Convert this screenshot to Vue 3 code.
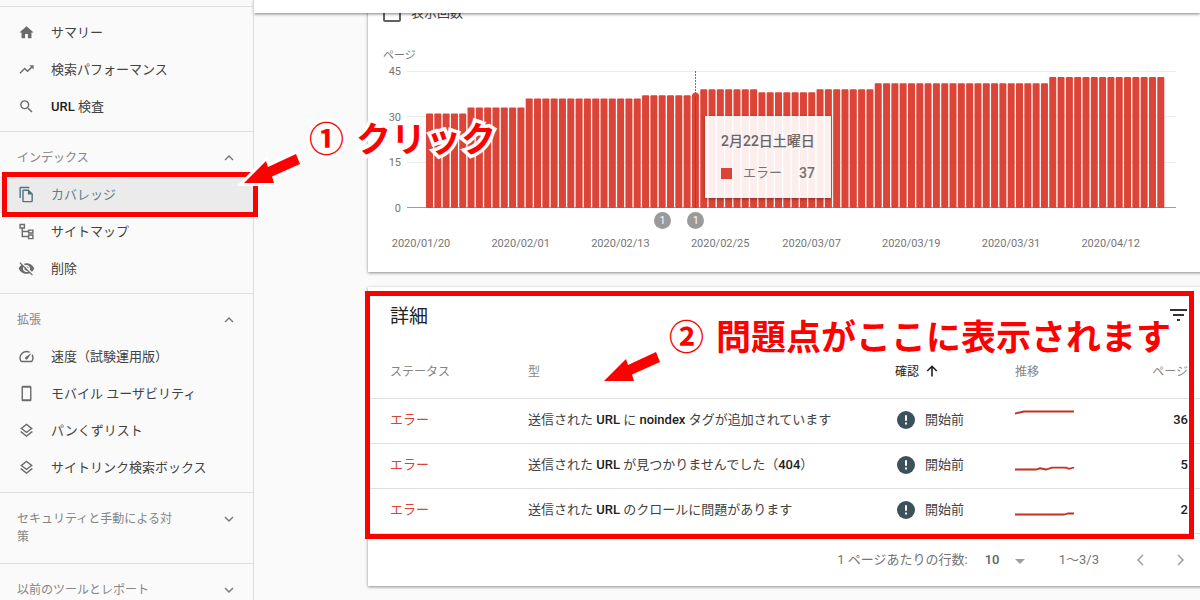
<script setup>
import { ref } from 'vue'

const icons = {
  home: 'M10 20v-6h4v6h5v-8h3L12 3 2 12h3v8z',
  trend: 'M16 6l2.29 2.29-4.88 4.88-4-4L2 16.59 3.41 18l6-6 4 4 6.3-6.29L22 12V6z',
  search: 'M15.5 14h-.79l-.28-.27A6.47 6.47 0 0 0 16 9.5 6.5 6.5 0 1 0 9.5 16c1.61 0 3.09-.59 4.23-1.57l.27.28v.79l5 4.99L20.49 19l-4.99-5zm-6 0C7.01 14 5 11.99 5 9.5S7.01 5 9.5 5 14 7.01 14 9.5 11.99 14 9.5 14z',
  copy: 'M16 1H4c-1.1 0-2 .9-2 2v14h2V3h12V1zm-1 4H8c-1.1 0-1.99.9-1.99 2L6 21c0 1.1.89 2 1.99 2H19c1.1 0 2-.9 2-2V11l-6-6zM8 21V7h6v5h5v9H8z',
  tree: 'M2 1h8v7H7v3h7V9h8v6h-8v-2H7v5h7v-2h8v7h-8v-3H5V8H2zM4 3v3h4V3zM16 11v2h4v-2zM16 18v3h4v-3z',
  hidden: 'M12 7c2.76 0 5 2.24 5 5 0 .65-.13 1.26-.36 1.83l2.92 2.92c1.51-1.26 2.7-2.89 3.43-4.75-1.73-4.39-6-7.5-11-7.5-1.4 0-2.74.25-3.98.7l2.16 2.16C10.74 7.13 11.35 7 12 7zM2 4.27l2.28 2.28.46.46A11.8 11.8 0 0 0 1 12c1.73 4.39 6 7.5 11 7.5 1.55 0 3.03-.3 4.38-.84l.42.42L19.73 22 21 20.73 3.27 3 2 4.27zM7.53 9.8l1.55 1.55c-.05.21-.08.43-.08.65 0 1.66 1.34 3 3 3 .22 0 .44-.03.65-.08l1.55 1.55c-.67.33-1.41.53-2.2.53-2.76 0-5-2.24-5-5 0-.79.2-1.53.53-2.2zm4.31-.78l3.15 3.15.02-.16c0-1.66-1.34-3-3-3l-.17.01z',
  speed: 'M20.38 8.57l-1.23 1.85a8 8 0 0 1-.22 7.58H5.07A8 8 0 0 1 15.58 6.85l1.85-1.23A10 10 0 0 0 3.35 19a2 2 0 0 0 1.72 1h13.85a2 2 0 0 0 1.74-1 10 10 0 0 0-.27-10.44zm-9.79 6.84a2 2 0 0 0 2.83 0l5.66-8.49-8.49 5.66a2 2 0 0 0 0 2.83z',
  phone: 'M17 1.01L7 1c-1.1 0-2 .9-2 2v18c0 1.1.9 2 2 2h10c1.1 0 2-.9 2-2V3c0-1.1-.9-1.99-2-1.99zM17 20H7V4h10v16z',
  layers: 'M11.99 18.54l-7.37-5.73L3 14.07l9 7 9-7-1.63-1.27-7.38 5.74zM12 16l7.36-5.73L21 9l-9-7-9 7 1.63 1.27L12 16zm0-11.47L17.74 9 12 13.47 6.26 9 12 4.53z'
}

const sections = [
  { items: [
    { icon: 'home', text: 'サマリー' },
    { icon: 'trend', text: '検索パフォーマンス' },
    { icon: 'search', latin: 'URL', text: ' 検査' }
  ] },
  { title: 'インデックス', open: true, items: [
    { icon: 'copy', text: 'カバレッジ', active: true },
    { icon: 'tree', text: 'サイトマップ' },
    { icon: 'hidden', text: '削除' }
  ] },
  { title: '拡張', open: true, items: [
    { icon: 'speed', text: '速度（試験運用版）' },
    { icon: 'phone', text: 'モバイル ユーザビリティ' },
    { icon: 'layers', text: 'パンくずリスト' },
    { icon: 'layers', text: 'サイトリンク検索ボックス' }
  ] },
  { title: 'セキュリティと手動による対策', items: [] },
  { title: '以前のツールとレポート', items: [] }
]

const runs = [[31, 5], [33, 7], [36, 14], [37, 7], [39, 7], [38, 7], [39, 7], [41, 21], [43, 14]]
const values = runs.flatMap(([value, count]) => Array(count).fill(value))

const plotWidth = 769
const plotHeight = 137
const dayWidth = 8.31
const barHeight = v => (v / 45) * plotHeight
const bars = values.map((v, i) => ({ x: 19 + i * dayWidth, y: plotHeight - barHeight(v), h: barHeight(v) }))
const dayX = day => 14 + day * dayWidth
const place = day => ({ left: (dayX(day) / plotWidth) * 100 + '%' })

const dates = [
  [0, '2020/01/20'], [12, '2020/02/01'], [24, '2020/02/13'], [36, '2020/02/25'],
  [47, '2020/03/07'], [59, '2020/03/19'], [71, '2020/03/31'], [83, '2020/04/12']
]

const rows = [
  { parts: ['送信された ', 'URL', ' に ', 'noindex', ' タグが追加されています'], pages: 36, line: '0,5.5 9,3.5 59,3.5' },
  { parts: ['送信された ', 'URL', ' が見つかりませんでした（', '404', '）'], pages: 5, line: '0,16.5 21,16.5 25,15.3 31,16.5 37,14.7 51,14.7 54,15.9 59,14.5' },
  { parts: ['送信された ', 'URL', ' のクロールに問題があります'], pages: 2, line: '0,16.5 49,16.5 53,15.5 59,15.5' }
]

const impressions = ref(false)
const perPage = ref('10')
</script>

<template>
  <div class="page">
    <nav class="sidebar">
      <section v-for="(section, s) in sections" :key="s" class="group" :class="{ plain: !section.title }">
        <button v-if="section.title" class="heading" :class="{ closed: !section.open }" type="button">
          <span>{{ section.title }}</span>
          <svg class="chevron" viewBox="0 0 10 10"><path :d="section.open ? 'M1 7l4-4 4 4' : 'M1 3l4 4 4-4'" /></svg>
        </button>
        <ul v-if="section.items.length">
          <li v-for="item in section.items" :key="item.text" :class="{ active: item.active }">
            <a href="#">
              <svg class="icon" viewBox="0 0 24 24"><path fill-rule="evenodd" :d="icons[item.icon]" /></svg>
              <span><b v-if="item.latin">{{ item.latin }}</b>{{ item.text }}</span>
            </a>
          </li>
        </ul>
      </section>
    </nav>

    <main class="main">
      <header class="topbar"></header>
      <div class="content">
        <section class="card chart-card">
          <label class="check"><input v-model="impressions" type="checkbox" /><span>表示回数</span></label>
          <div class="caption">ページ</div>
          <div class="chart">
            <div class="scale"><span>45</span><span>30</span><span>15</span><span>0</span></div>
            <div class="graph">
              <svg class="plot" :viewBox="`0 0 ${plotWidth} ${plotHeight}`" preserveAspectRatio="none">
                <path class="rule" d="M0 .5H769M0 45.5H769M0 91.5H769" />
                <path class="base" d="M0 136.5H769" />
                <rect v-for="(bar, i) in bars" :key="i" class="bar" :x="bar.x" :y="bar.y" width="7" :height="bar.h" rx="0.8" />
                <circle class="bar" cx="288.5" cy="25" r="3.5" />
                <path class="cursor dots" d="M288.5 0V22" />
                <path class="cursor" d="M288.5 25V137" />
              </svg>
              <div class="markers">
                <span v-for="day in [29, 33]" :key="day" class="marker" :style="place(day)">1</span>
              </div>
              <div class="dates">
                <span v-for="[day, text] in dates" :key="text" :style="place(day)">{{ text }}</span>
              </div>
              <div class="tooltip">
                <strong>2月22日土曜日</strong>
                <div class="legend"><i></i><span>エラー</span><b>37</b></div>
              </div>
            </div>
          </div>
        </section>

        <section class="card">
          <div class="title">
            <h2>詳細</h2>
            <button type="button" aria-label="フィルタ">
              <svg viewBox="0 0 18 12"><path d="M0 1h17M3 6h11M7 11h3" /></svg>
            </button>
          </div>
          <table>
            <thead>
              <tr>
                <th class="c-status">ステータス</th>
                <th>型</th>
                <th class="c-check sorted">確認
                  <svg viewBox="0 0 12 12"><path d="M6 11.5V1.5M1.3 6L6 1.3 10.7 6" /></svg>
                </th>
                <th class="c-trend">推移</th>
                <th class="c-pages">ページ</th>
              </tr>
            </thead>
            <tbody>
              <tr v-for="row in rows" :key="row.pages">
                <td class="c-status error">エラー</td>
                <td><template v-for="(part, i) in row.parts" :key="i"><b v-if="i % 2">{{ part }}</b><template v-else>{{ part }}</template></template></td>
                <td>
                  <div class="state">
                    <svg viewBox="0 0 18 18"><circle cx="9" cy="9" r="9" /><path d="M9 4.3v5.4M9 11.5v2" /></svg>開始前
                  </div>
                </td>
                <td><svg class="spark" viewBox="0 0 60 24"><polyline :points="row.line" /></svg></td>
                <td class="c-pages"><b>{{ row.pages }}</b></td>
              </tr>
            </tbody>
          </table>
          <footer class="pager">
            <label for="per-page">1 ページあたりの行数:</label>
            <div class="picker">
              <select id="per-page" v-model="perPage"><option>10</option><option>25</option></select>
              <svg viewBox="0 0 10 5"><path d="M0 0h10L5 5z" /></svg>
            </div>
            <span class="range">1〜3/3</span>
            <button type="button" aria-label="前へ"><svg viewBox="0 0 8 12"><path d="M7 1L2 6l5 5" /></svg></button>
            <button type="button" aria-label="次へ"><svg viewBox="0 0 8 12"><path d="M1 1l5 5-5 5" /></svg></button>
          </footer>
          <div class="frame"></div>
        </section>
      </div>
    </main>

    <div class="note first"><span>①</span><span>クリック</span></div>
    <div class="note second"><span>②</span><span>問題点がここに表示されます</span></div>
    <svg class="arrow one" viewBox="0 0 64 40"><path d="M4 34L26 12l2 6 28-13 4 10-28 12.500 2 6.500z" /></svg>
    <svg class="arrow two" viewBox="0 0 64 40"><path d="M4 34L26 12l2 6 28-13 4 10-28 12.500 2 6.500z" /></svg>
  </div>
</template>

<style>
body { margin: 0; }
</style>

<style scoped>
* { box-sizing: border-box; }
.page {
  position: relative;
  display: flex;
  height: 100vh;
  overflow: hidden;
  background: #fafafa;
  color: #424242;
  font: 400 13px/18px Roboto, "Noto Sans CJK JP", sans-serif;
}
button { padding: 0; border: 0; background: none; font: inherit; color: inherit; }
b { font-weight: 500; color: #212121; }

.sidebar {
  position: relative;
  z-index: 2;
  flex: none;
  width: 254px;
  padding-top: 6px;
  border-right: 1px solid #dcdcdc;
}
.group { padding-bottom: 6px; border-top: 1px solid #e0e0e0; }
.group.plain { padding-top: 7px; }
.group ul { margin: 0; padding: 0; list-style: none; }
.group li { position: relative; }
.group a {
  display: flex;
  align-items: center;
  gap: 16px;
  height: 37px;
  padding-left: 18px;
  color: #424242;
  text-decoration: none;
}
.icon { width: 17px; height: 17px; fill: #6b6b6b; }
.active a { background: #ebebeb; color: #607d8b; }
.active .icon { fill: #54717f; }
.active::after {
  content: "";
  position: absolute;
  inset: -4px -5px -4px 2px;
  border: 5px solid #f00;
}
.heading {
  display: flex;
  justify-content: space-between;
  align-items: flex-start;
  width: 100%;
  padding: 17px 19px 9px 17px;
  color: #858585;
  font-size: 12px;
  text-align: left;
}
.heading.closed { padding-bottom: 11px; }
.heading span { width: 160px; }
.chevron { width: 10px; height: 10px; margin-top: 4px; fill: none; stroke: #757575; stroke-width: 1.400; }

.main { flex: 1; min-width: 0; }
.topbar {
  position: relative;
  z-index: 1;
  height: 13px;
  background: #fff;
  box-shadow: 0 1px 3px rgba(0, 0, 0, .5);
}
.content { display: grid; gap: 15px; margin: -10px -16px 0 114px; }
.card {
  position: relative;
  min-width: 0;
  background: #fff;
  box-shadow: 0 1px 3px rgba(0, 0, 0, .45);
}
.chart-card { padding: 0 40px 20px 15px; }
.check { display: flex; align-items: center; gap: 10px; height: 20px; }
.check input {
  appearance: none;
  width: 18px;
  height: 18px;
  margin: 0;
  border: 2px solid #616161;
  border-radius: 2px;
}
.caption { margin: 25px 0 7px; font-size: 11px; line-height: 16px; color: #757575; }
.chart { display: flex; gap: 6px; color: #757575; font-size: 11px; line-height: 16px; }
.scale {
  display: flex;
  flex-direction: column;
  justify-content: space-between;
  width: 18px;
  height: 153px;
  margin-top: -7px;
  text-align: right;
}
.graph { position: relative; flex: 1; min-width: 0; }
.plot { display: block; width: 100%; height: 137px; }
.rule { stroke: #ececec; }
.base { stroke: #9e9e9e; }
.bar { fill: #db4437; }
.cursor { stroke: #7c4a45; stroke-opacity: .8; }
.dots { stroke: #555; stroke-dasharray: 2 1; }
.markers { position: relative; height: 17px; margin-top: 4px; }
.marker {
  position: absolute;
  width: 17px;
  height: 17px;
  margin-left: -8px;
  border-radius: 50%;
  background: #9a9a9a;
  color: #fff;
  font-size: 10px;
  line-height: 17px;
  text-align: center;
}
.dates { position: relative; height: 16px; margin-top: 7px; }
.dates span { position: absolute; width: 80px; margin-left: -40px; text-align: center; }
.tooltip {
  position: absolute;
  top: 45px;
  left: 298px;
  min-width: 126px;
  padding: 16px;
  background: rgba(255, 255, 255, .91);
  box-shadow: 0 1px 3px rgba(0, 0, 0, .4);
  font-size: 13px;
  line-height: 18px;
}
.tooltip strong { display: block; margin-bottom: 14px; font-size: 14px; font-weight: 500; white-space: nowrap; color: #666; }
.legend { display: flex; align-items: center; }
.legend i { width: 11px; height: 11px; margin-right: 11px; background: #db4437; }
.legend b { margin-left: auto; font-size: 14px; color: #707070; }

.title {
  display: flex;
  justify-content: space-between;
  padding: 18px 28px 15px 22px;
}
.title h2 { margin: 0; font-size: 19px; line-height: 24px; font-weight: 400; color: #212121; }
.title button { align-self: flex-start; margin-top: 4px; }
.title svg { display: block; width: 18px; height: 12px; fill: none; stroke: #333; stroke-width: 2; }
table { width: 100%; border-collapse: collapse; table-layout: fixed; }
th { height: 54px; padding: 2px 0 0; font-size: 12px; font-weight: 400; text-align: left; color: #858585; }
td { height: 45px; padding: 0 0 2px; border-top: 1px solid #e0e0e0; white-space: nowrap; }
.c-status { width: 160px; padding-left: 22px; }
.c-check { width: 120px; }
.c-trend { width: 100px; }
.c-pages { width: 101px; padding-right: 28px; text-align: right; }
th.sorted { color: #212121; }
.sorted svg { width: 12px; height: 12px; margin-left: 4px; vertical-align: -1px; fill: none; stroke: #212121; stroke-width: 1.600; }
.error { color: #db4437; }
.state { display: flex; align-items: center; gap: 10px; padding-left: 2px; }
.state svg { width: 18px; height: 18px; fill: #3c515c; }
.state path { stroke: #fff; stroke-width: 2; }
.spark { display: block; width: 60px; height: 24px; fill: none; stroke: #c5301f; stroke-width: 1.800; }
.pager {
  display: flex;
  justify-content: flex-end;
  align-items: center;
  height: 53px;
  padding-right: 23px;
  border-top: 1px solid #e0e0e0;
  color: #757575;
}
.picker { position: relative; width: 40px; margin: 0 34px 0 17px; }
.picker select {
  appearance: none;
  display: block;
  width: 100%;
  padding: 0;
  border: 0;
  background: none;
  color: #616161;
  font: inherit;
  font-weight: 500;
}
.picker svg { position: absolute; right: 0; top: 8px; width: 10px; height: 5px; fill: #9e9e9e; pointer-events: none; }
.range { margin-right: 29px; }
.pager button { width: 24px; height: 24px; }
.pager button + button { margin-left: 17px; }
.pager button svg { display: block; width: 8px; height: 12px; margin: auto; fill: none; stroke: #9e9e9e; stroke-width: 1.500; }

.frame { position: absolute; inset: 4px 22px 47px -3px; border: 5px solid #f00; pointer-events: none; }
.note {
  position: absolute;
  z-index: 3;
  display: flex;
  gap: 12px;
  color: #f00;
  font: 700 35px/40px "Noto Sans CJK JP", sans-serif;
  white-space: nowrap;
  -webkit-text-stroke: 7px #fff;
  paint-order: stroke fill;
  stroke-linejoin: round;
  pointer-events: none;
}
.first { top: 117px; left: 309px; }
.second { top: 315px; left: 669px; }
.arrow {
  position: absolute;
  z-index: 3;
  width: 64px;
  height: 40px;
  overflow: visible;
  fill: #f00;
  stroke: #fff;
  stroke-width: 6;
  paint-order: stroke;
  pointer-events: none;
}
.one { left: 240px; top: 149px; }
.two { left: 600px; top: 347px; }
</style>
